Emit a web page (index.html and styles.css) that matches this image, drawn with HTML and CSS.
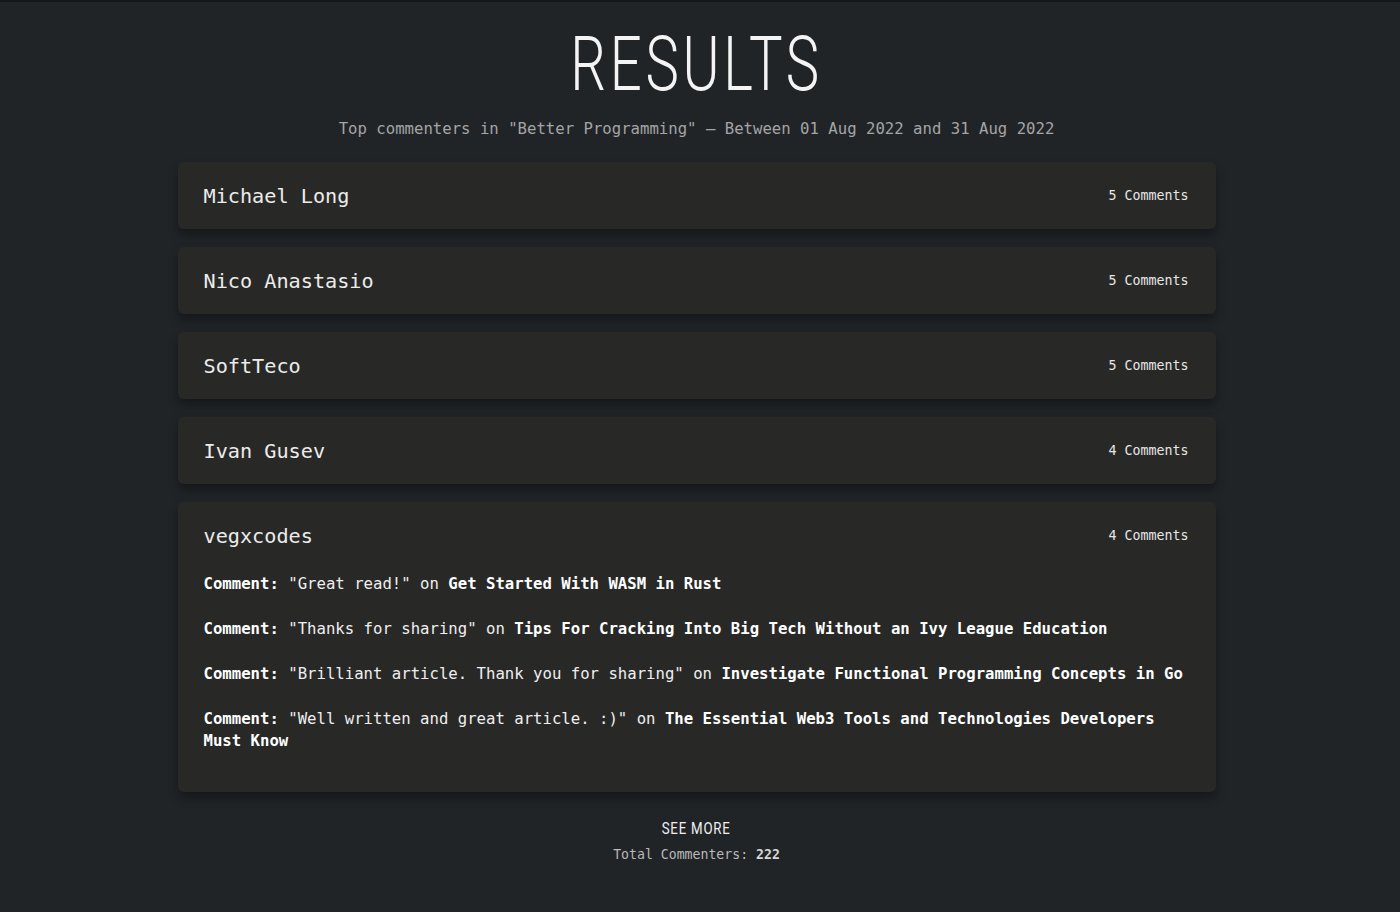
FILE: index.html
```html
<!DOCTYPE html>
<html>
<head>
<meta charset="utf-8">
<link rel="stylesheet" href="styles.css">
</head>
<body>
<div class="page">
  <h1 class="title">RESULTS</h1>
  <p class="subtitle">Top commenters in "Better Programming" — Between 01 Aug 2022 and 31 Aug 2022</p>
  <div class="list">
    <div class="card">
      <div class="card-head"><span class="name">Michael Long</span><span class="count">5 Comments</span></div>
    </div>
    <div class="card">
      <div class="card-head"><span class="name">Nico Anastasio</span><span class="count">5 Comments</span></div>
    </div>
    <div class="card">
      <div class="card-head"><span class="name">SoftTeco</span><span class="count">5 Comments</span></div>
    </div>
    <div class="card">
      <div class="card-head"><span class="name">Ivan Gusev</span><span class="count">4 Comments</span></div>
    </div>
    <div class="card">
      <div class="card-head"><span class="name">vegxcodes</span><span class="count">4 Comments</span></div>
      <div class="comments">
        <p class="comment"><b>Comment:</b> "Great read!" on <b>Get Started With WASM in Rust</b></p>
        <p class="comment"><b>Comment:</b> "Thanks for sharing" on <b>Tips For Cracking Into Big Tech Without an Ivy League Education</b></p>
        <p class="comment"><b>Comment:</b> "Brilliant article. Thank you for sharing" on <b>Investigate Functional Programming Concepts in Go</b></p>
        <p class="comment"><b>Comment:</b> "Well written and great article. :)" on <b>The Essential Web3 Tools and Technologies Developers Must Know</b></p>
      </div>
    </div>
  </div>
  <div class="footer">
    <div class="see-more">SEE MORE</div>
    <div class="total">Total Commenters: <b>222</b></div>
  </div>
</div>
</body>
</html>
```

FILE: styles.css
```css
html, body {
  margin: 0;
  padding: 0;
  background: #212427;
}
body {
  border-top: 2px solid #15181a;
  min-height: 910px;
  padding-right: 7px;
  font-family: "DejaVu Sans Mono", "Liberation Mono", monospace;
  color: #ececec;
}
.page {
  width: 1038px;
  margin: 0 auto;
  display: flex;
  flex-direction: column;
  align-items: center;
}
.title {
  margin: 24px 0 0 0;
  font-family: "Roboto", "DejaVu Sans", sans-serif;
  font-weight: 300;
  font-size: 76px;
  line-height: 76px;
  letter-spacing: 5px;
  color: #f4f4f4;
  transform: scaleX(0.74);
}
.subtitle {
  margin: 17px 0 0 0;
  font-size: 15.65px;
  line-height: 20px;
  color: #a3a5a6;
}
.list {
  width: 100%;
  margin-top: 23px;
  display: flex;
  flex-direction: column;
  gap: 18px;
}
.card {
  background: #282927;
  border-radius: 6px;
  padding: 20px 27px 20px 26px;
  box-shadow: 0 6px 10px rgba(0, 0, 0, 0.35);
}
.card-head {
  display: flex;
  justify-content: space-between;
  align-items: center;
  height: 27px;
}
.name {
  font-size: 20.2px;
  color: #ececec;
}
.count {
  font-size: 13.3px;
  color: #e6e6e6;
}
.comments {
  margin-top: 24px;
  margin-bottom: 20px;
  display: flex;
  flex-direction: column;
  gap: 23px;
}
.comment {
  margin: 0;
  font-size: 15.65px;
  line-height: 22px;
  color: #efefef;
}
.comment b {
  color: #ffffff;
}
.footer {
  margin-top: 26px;
  display: flex;
  flex-direction: column;
  align-items: center;
}
.see-more {
  font-family: "Roboto", "DejaVu Sans", sans-serif;
  font-size: 17px;
  line-height: 20px;
  letter-spacing: 1px;
  color: #f0f0f0;
  transform: scaleX(0.78);
}
.total {
  margin-top: 8px;
  font-size: 13.2px;
  line-height: 18px;
  color: #b8b9ba;
}
.total b {
  color: #d8d8d8;
}
```
